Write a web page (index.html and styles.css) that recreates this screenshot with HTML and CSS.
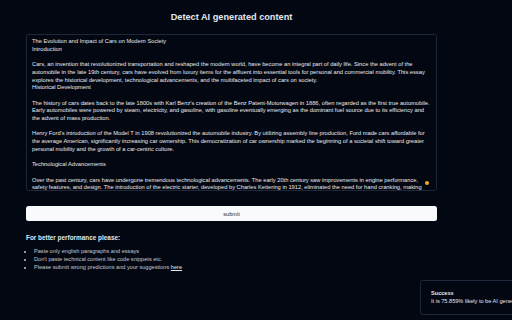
FILE: index.html
```html
<!DOCTYPE html>
<html lang="en">
<head>
    <meta charset="utf-8">
    <meta name="viewport" content="width=device-width, initial-scale=1">
    <title>Detect AI generated content</title>
    <link rel="stylesheet" href="styles.css">
</head>
<body>
<main class="page">
    <h1 class="title">Detect AI generated content</h1>
    <div class="input-wrap">
        <div class="essay">The Evolution and Impact of Cars on Modern Society
Introduction

Cars, an invention that revolutionized transportation and reshaped the modern world, have become an integral part of daily life. Since the advent of the automobile in the late 19th century, cars have evolved from luxury items for the affluent into essential tools for personal and commercial mobility. This essay explores the historical development, technological advancements, and the multifaceted impact of cars on society.
Historical Development

The history of cars dates back to the late 1800s with Karl Benz's creation of the Benz Patent-Motorwagen in 1886, often regarded as the first true automobile. Early automobiles were powered by steam, electricity, and gasoline, with gasoline eventually emerging as the dominant fuel source due to its efficiency and the advent of mass production.

Henry Ford's introduction of the Model T in 1908 revolutionized the automobile industry. By utilizing assembly line production, Ford made cars affordable for the average American, significantly increasing car ownership. This democratization of car ownership marked the beginning of a societal shift toward greater personal mobility and the growth of a car-centric culture.

Technological Advancements

Over the past century, cars have undergone tremendous technological advancements. The early 20th century saw improvements in engine performance, safety features, and design. The introduction of the electric starter, developed by Charles Kettering in 1912, eliminated the need for hand cranking, making cars more accessible to a wider audience.</div>
        <span class="dot"></span>
    </div>
    <button class="submit-btn">submit</button>

    <h2 class="tips-title">For better performance please:</h2>
    <ul class="tips">
        <li>Paste only english paragraphs and essays</li>
        <li>Don't paste technical content like code snippets etc.</li>
        <li>Please submit wrong predictions and your suggestions <a href="#">here</a></li>
    </ul>
</main>

<div class="toast">
    <div class="toast-title">Success</div>
    <div class="toast-text">It is 75.859% likely to be AI generated</div>
</div>
</body>
</html>
```

FILE: styles.css
```css
body {
    font-family: "Liberation Sans", Arial, sans-serif;
    background-color: #030711;
    color: #e1e7ef;
    margin: 0;
    height: 320px;
    overflow: hidden;
}
.page {
    width: 411px;
    margin-left: 26px;
    padding-top: 11px;
}
.title {
    font-size: 9.2px;
    font-weight: bold;
    text-align: center;
    margin: 0 0 11px 0;
    line-height: 12px;
}
.input-wrap {
    position: relative;
}
.essay {
    height: 149px;
    overflow: hidden;
    border: 1px solid #1d283a;
    border-radius: 2.5px;
    padding: 3px 2.5px 3px 5px;
    font-size: 5.72px;
    line-height: 7.7px;
    white-space: pre-wrap;
    color: #e6eaf0;
}
.dot {
    position: absolute;
    right: 8px;
    bottom: 6px;
    width: 4px;
    height: 4px;
    border-radius: 50%;
    background-color: #f5a524;
}
.submit-btn {
    display: block;
    width: 100%;
    height: 15px;
    margin-top: 15px;
    border: none;
    border-radius: 2.5px;
    background-color: #f8fafc;
    color: #1e293b;
    font-family: inherit;
    font-size: 5.6px;
    cursor: pointer;
}
.tips-title {
    font-size: 6.4px;
    font-weight: bold;
    margin: 13px 0 6px 0;
    line-height: 8px;
}
.tips {
    margin: 0;
    padding-left: 8px;
    font-size: 5.6px;
    line-height: 7.9px;
    color: #c3cad5;
}
.tips a {
    color: #e1e7ef;
}
.toast {
    position: fixed;
    left: 420px;
    top: 280px;
    width: 150px;
    padding: 9px 10px;
    border: 1px solid #1d283a;
    border-radius: 2.5px;
    background-color: #030711;
    font-size: 5.6px;
    line-height: 7.7px;
}
.toast-title {
    font-weight: bold;
}
```
